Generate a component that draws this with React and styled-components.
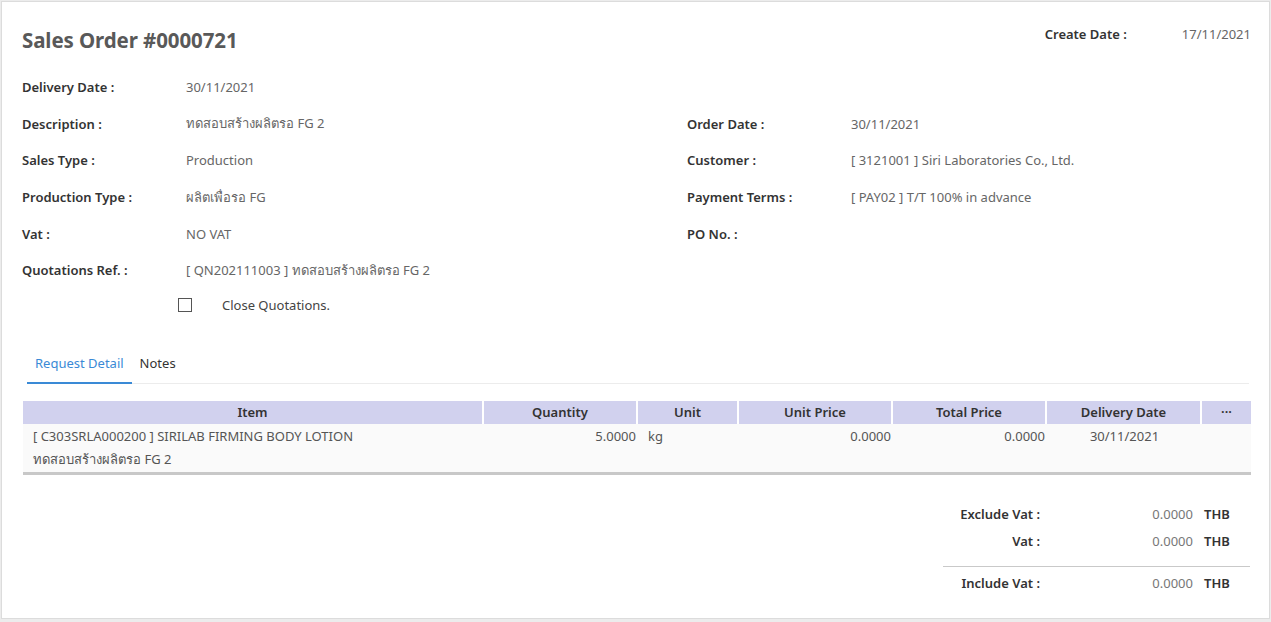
import React from "react";
import styled, { createGlobalStyle } from "styled-components";

const GlobalStyle = createGlobalStyle`
  html, body {
    margin: 0;
    padding: 0;
    background: #ececec;
    font-family: "Noto Sans", "Open Sans", sans-serif;
    font-size: 13px;
  }
`;

const Card = styled.div`
  margin: 1px 1px 0 1px;
  height: 618px;
  box-sizing: border-box;
  background: #fff;
  border: 1px solid #dcdcdc;
  padding: 14px 20px 0 20px;
  display: flex;
  flex-direction: column;
`;

const Header = styled.div`
  display: flex;
  justify-content: space-between;
  align-items: flex-start;
  height: 53px;
`;

const Title = styled.h1`
  margin: 10px 0 0 0;
  font-size: 20.5px;
  font-weight: 700;
  color: #595959;
  letter-spacing: -0.1px;
`;

const CreateDate = styled.div`
  display: flex;
  gap: 55px;
  margin: 8px -2px 0 0;
  line-height: 20px;
`;

const Label = styled.span`
  color: #333;
  font-weight: 600;
`;

const Value = styled.span`
  color: #666;
`;

const InfoGrid = styled.div`
  display: grid;
  grid-template-columns: 164px 501px 164px 1fr;
  grid-auto-rows: 36.6px;
  align-items: center;
`;

const CheckRow = styled.div`
  display: flex;
  align-items: center;
  height: 34px;
  padding-left: 156px;
  margin-top: -1px;
`;

const Box = styled.span`
  width: 12px;
  height: 12px;
  border: 1px solid #555;
  box-sizing: content-box;
  margin-right: 30px;
`;

const CheckText = styled.span`
  color: #444;
`;

const Tabs = styled.div`
  display: flex;
  margin: 25px 0 0 5px;
  border-bottom: 1px solid #ececec;
`;

const Tab = styled.div`
  padding: 7px 8px 10px 8px;
  margin-bottom: -1px;
  color: ${(p) => (p.active ? "#3a8ad6" : "#333")};
  border-bottom: 2px solid ${(p) => (p.active ? "#3a8ad6" : "transparent")};
  line-height: 18px;
  font-size: 13px;
`;

const Table = styled.table`
  margin-top: 17px;
  margin-left: 1px;
  width: 1228px;
  border-collapse: separate;
  border-spacing: 0;
  table-layout: fixed;
  border-bottom: 3px solid #c8c8c8;
`;

const Th = styled.th`
  background: #d1d1ee;
  color: #333;
  font-weight: 600;
  height: 23px;
  padding: 0;
  border-right: 2px solid #fff;
  text-align: center;
  &:last-child {
    border-right: none;
  }
`;

const Td = styled.td`
  height: 24px;
  padding: 0 ${(p) => (p.right ? "2px" : "10px")} 0 ${(p) => (p.right ? "0" : "10px")};
  color: #555;
  background: #fafafa;
  text-align: ${(p) => p.align || "left"};
  white-space: nowrap;
  overflow: visible;
`;

const Totals = styled.div`
  align-self: flex-end;
  width: 307px;
  margin-top: 26px;
  margin-right: -1px;
`;

const TotalRow = styled.div`
  display: grid;
  grid-template-columns: 97px 153px 1fr;
  align-items: center;
  height: 27px;
`;

const TotalLabel = styled(Label)`
  text-align: right;
`;

const TotalValue = styled(Value)`
  text-align: right;
  color: #777;
`;

const Currency = styled(Label)`
  padding-left: 11px;
`;

const Divider = styled.div`
  border-top: 1px solid #c9c9c9;
  margin: 11px 0 3px 0;
`;

const rows = [
  ["Delivery Date :", "30/11/2021", "", ""],
  ["Description :", "ทดสอบสร้างผลิตรอ FG 2", "Order Date :", "30/11/2021"],
  ["Sales Type :", "Production", "Customer :", "[ 3121001 ] Siri Laboratories Co., Ltd."],
  ["Production Type :", "ผลิตเพื่อรอ FG", "Payment Terms :", "[ PAY02 ] T/T 100% in advance"],
  ["Vat :", "NO VAT", "PO No. :", ""],
  ["Quotations Ref. :", "[ QN202111003 ] ทดสอบสร้างผลิตรอ FG 2", "", ""],
];

const columns = [
  ["Item", 461],
  ["Quantity", 154],
  ["Unit", 101],
  ["Unit Price", 154],
  ["Total Price", 154],
  ["Delivery Date", 155],
  ["\u00b7\u00b7\u00b7", 49],
];

function TotalLine({ label }) {
  return (
    <TotalRow>
      <TotalLabel>{label}</TotalLabel>
      <TotalValue>0.0000</TotalValue>
      <Currency>THB</Currency>
    </TotalRow>
  );
}

export default function App() {
  return (
    <>
      <GlobalStyle />
      <Card>
        <Header>
          <Title>Sales Order #0000721</Title>
          <CreateDate>
            <Label>Create Date :</Label>
            <Value>17/11/2021</Value>
          </CreateDate>
        </Header>
        <InfoGrid>
          {rows.map((r, i) => (
            <React.Fragment key={i}>
              <Label>{r[0]}</Label>
              <Value>{r[1]}</Value>
              <Label>{r[2]}</Label>
              <Value>{r[3]}</Value>
            </React.Fragment>
          ))}
        </InfoGrid>
        <CheckRow>
          <Box />
          <CheckText>Close Quotations.</CheckText>
        </CheckRow>
        <Tabs>
          <Tab active>Request Detail</Tab>
          <Tab>Notes</Tab>
        </Tabs>
        <Table>
          <colgroup>
            {columns.map(([name, w]) => (
              <col key={name} style={{ width: w }} />
            ))}
          </colgroup>
          <thead>
            <tr>
              {columns.map(([name]) => (
                <Th key={name}>{name}</Th>
              ))}
            </tr>
          </thead>
          <tbody>
            <tr>
              <Td>[ C303SRLA000200 ] SIRILAB FIRMING BODY LOTION</Td>
              <Td align="right" right>5.0000</Td>
              <Td>kg</Td>
              <Td align="right" right>0.0000</Td>
              <Td align="right" right>0.0000</Td>
              <Td align="center">30/11/2021</Td>
              <Td />
            </tr>
            <tr>
              <Td>ทดสอบสร้างผลิตรอ FG 2</Td>
              <Td />
              <Td />
              <Td />
              <Td />
              <Td />
              <Td />
            </tr>
          </tbody>
        </Table>
        <Totals>
          <TotalLine label="Exclude Vat :" />
          <TotalLine label="Vat :" />
          <Divider />
          <TotalLine label="Include Vat :" />
        </Totals>
      </Card>
    </>
  );
}
